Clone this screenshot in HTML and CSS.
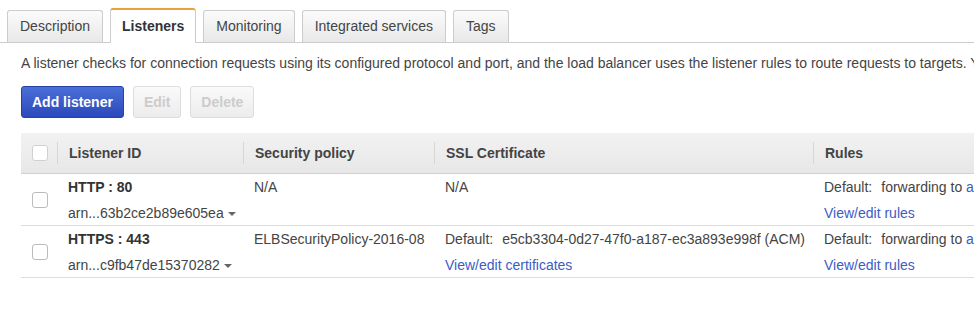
FILE: index.html
```html
<!DOCTYPE html>
<html lang="en">
<head>
    <meta charset="UTF-8">
    <title>Load balancer listeners</title>
    <link rel="stylesheet" href="styles.css">
</head>
<body>
    <div class="tabs">
        <div class="tab">Description</div>
        <div class="tab active">Listeners</div>
        <div class="tab">Monitoring</div>
        <div class="tab">Integrated services</div>
        <div class="tab">Tags</div>
    </div>

    <div class="content">
        <p class="intro">A listener checks for connection requests using its configured protocol and port, and the load balancer uses the listener rules to route requests to targets. You can add, edit, or remove listeners.</p>

        <div class="actions">
            <button class="btn primary">Add listener</button>
            <button class="btn" disabled>Edit</button>
            <button class="btn" disabled>Delete</button>
        </div>

        <div class="table-wrap">
            <table class="listeners">
                <colgroup>
                    <col class="c-check">
                    <col class="c-id">
                    <col class="c-policy">
                    <col class="c-cert">
                    <col class="c-rules">
                </colgroup>
                <thead>
                    <tr>
                        <th class="check"><span class="box"></span></th>
                        <th><div class="th-in">Listener ID</div></th>
                        <th><div class="th-in">Security policy</div></th>
                        <th><div class="th-in">SSL Certificate</div></th>
                        <th><div class="th-in">Rules</div></th>
                    </tr>
                </thead>
                <tbody>
                    <tr>
                        <td class="check"><span class="box"></span></td>
                        <td>
                            <div class="line strong">HTTP : 80</div>
                            <div class="line sub">arn...63b2ce2b89e605ea<span class="caret"></span></div>
                        </td>
                        <td><div class="line">N/A</div></td>
                        <td><div class="line">N/A</div></td>
                        <td>
                            <div class="line"><span class="label">Default:</span>forwarding to <a href="#">app-http-target-group</a></div>
                            <div class="line sub"><a href="#">View/edit rules</a></div>
                        </td>
                    </tr>
                    <tr>
                        <td class="check"><span class="box"></span></td>
                        <td>
                            <div class="line strong">HTTPS : 443</div>
                            <div class="line sub">arn...c9fb47de15370282<span class="caret"></span></div>
                        </td>
                        <td><div class="line">ELBSecurityPolicy-2016-08</div></td>
                        <td>
                            <div class="line"><span class="label">Default:</span>e5cb3304-0d27-47f0-a187-ec3a893e998f (ACM)</div>
                            <div class="line sub"><a href="#">View/edit certificates</a></div>
                        </td>
                        <td>
                            <div class="line"><span class="label">Default:</span>forwarding to <a href="#">app-https-target-group</a></div>
                            <div class="line sub"><a href="#">View/edit rules</a></div>
                        </td>
                    </tr>
                </tbody>
            </table>
        </div>
    </div>
</body>
</html>
```

FILE: styles.css
```css
body {
    margin: 0;
    font-family: "Liberation Sans", Arial, sans-serif;
    font-size: 14px;
    color: #444;
    background-color: #fff;
    overflow: hidden;
}
.tabs {
    display: flex;
    align-items: flex-end;
    gap: 7px;
    padding: 8px 0 0 7px;
    border-bottom: 1px solid #ccc;
}
.tab {
    height: 31px;
    line-height: 31px;
    padding: 0 12px;
    border: 1px solid #ccc;
    border-bottom: none;
    border-radius: 3px 3px 0 0;
    background: linear-gradient(#fbfbfb, #e8e8e8);
    color: #444;
}
.tab.active {
    height: 33px;
    line-height: 33px;
    margin-bottom: -1px;
    padding: 0 11px;
    border-top: 2px solid #e7a23b;
    background: #fff;
    font-weight: bold;
    color: #333;
}
.content {
    padding-left: 21px;
}
.intro {
    margin: 11px 0 0;
    line-height: 18px;
    white-space: nowrap;
    overflow: hidden;
}
.actions {
    display: flex;
    gap: 9px;
    margin-top: 14px;
}
.btn {
    height: 32px;
    padding: 0 10px;
    font-family: inherit;
    font-size: 14px;
    font-weight: bold;
    border: 1px solid #ddd;
    border-radius: 3px;
    background: linear-gradient(#fafafa, #ececec);
    color: #ccc;
}
.btn.primary {
    border-color: #2441a6;
    background: linear-gradient(#4b6fd8, #2a49bb);
    color: #fff;
}
.table-wrap {
    margin-top: 15px;
    overflow: hidden;
}
.listeners {
    width: 1192px;
    table-layout: fixed;
    border-collapse: collapse;
}
.c-check { width: 36px; }
.c-id { width: 186px; }
.c-policy { width: 191px; }
.c-cert { width: 379px; }
.c-rules { width: 400px; }
.listeners th {
    height: 40px;
    padding: 0;
    text-align: left;
    font-weight: bold;
    color: #444;
    background: linear-gradient(#f2f2f2, #e7e7e7);
    border-bottom: 1px solid #d2d2d2;
}
.th-in {
    line-height: 22px;
    padding-left: 11px;
    border-left: 1px solid #d6d6d6;
}
.listeners td {
    padding: 4px 11px 3px;
    vertical-align: top;
    border-bottom: 1px solid #ddd;
    white-space: nowrap;
    overflow: hidden;
}
.listeners .check {
    padding: 0 0 0 11px;
    vertical-align: middle;
}
.box {
    display: block;
    width: 14px;
    height: 14px;
    border: 1px solid #bbb;
    border-radius: 3px;
    background-color: #fff;
}
thead .box {
    border-color: #d0d0d0;
}
.line {
    line-height: 18px;
}
.line.sub {
    margin-top: 8px;
}
.strong {
    font-weight: bold;
    color: #333;
}
.label {
    margin-right: 9px;
}
.caret {
    display: inline-block;
    margin-left: 4px;
    vertical-align: middle;
    border-top: 4px solid #666;
    border-left: 4px solid transparent;
    border-right: 4px solid transparent;
}
a {
    color: #3d5cc4;
    text-decoration: none;
}
```
